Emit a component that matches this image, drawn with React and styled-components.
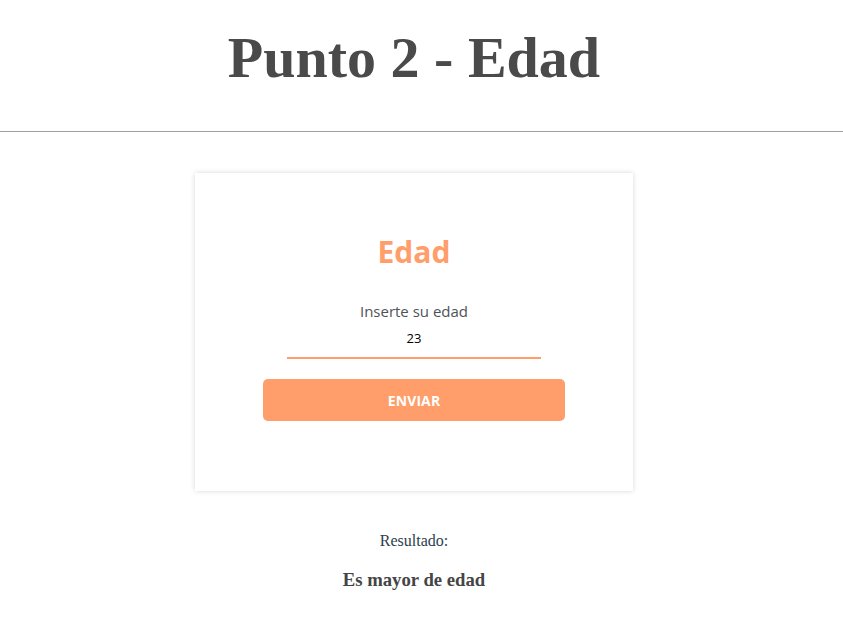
import React, { useState } from "react";
import styled, { createGlobalStyle } from "styled-components";

const GlobalStyle = createGlobalStyle`
  body {
    margin: 0;
    background: #ffffff;
    font-family: "Liberation Serif", "Times New Roman", serif;
    color: #2c3e50;
  }
`;

export default function App() {
  const [edad, setEdad] = useState("23");
  const mayor = Number(edad) >= 18;

  return (
    <>
      <GlobalStyle />
      <Header>
        <Title>Punto 2 - Edad</Title>
      </Header>
      <Divider />
      <Main>
        <Card>
          <CardTitle>Edad</CardTitle>
          <Label htmlFor="edad">Inserte su edad</Label>
          <Input
            id="edad"
            type="text"
            value={edad}
            onChange={e => setEdad(e.target.value)}
          />
          <Button type="button">ENVIAR</Button>
        </Card>
        <ResultLabel>Resultado:</ResultLabel>
        <ResultText>{mayor ? "Es mayor de edad" : "Es menor de edad"}</ResultText>
      </Main>
    </>
  );
}

const Header = styled.header`
  padding: 24px 15px 0 0;
  text-align: center;
`;

const Title = styled.h1`
  margin: 0;
  font-size: 58px;
  line-height: 67px;
  font-weight: 700;
  color: #4a4a4a;
`;

const Divider = styled.hr`
  margin: 40px 0 0;
  border: none;
  border-top: 1px solid #a0a0a0;
`;

const Main = styled.main`
  display: flex;
  flex-direction: column;
  align-items: center;
  padding: 41px 15px 0 0;
`;

const Card = styled.div`
  width: 438px;
  box-sizing: border-box;
  padding: 59px 0 70px;
  display: flex;
  flex-direction: column;
  align-items: center;
  background: #ffffff;
  box-shadow: 0 0 5px rgba(0, 0, 0, 0.16);
  font-family: "Open Sans", "Noto Sans", sans-serif;
`;

const CardTitle = styled.h2`
  margin: 0;
  font-size: 30px;
  line-height: 40px;
  font-weight: 700;
  color: #ff9e6a;
`;

const Label = styled.label`
  margin-top: 29px;
  font-size: 15px;
  line-height: 20px;
  color: #4f5358;
`;

const Input = styled.input`
  margin-top: 4px;
  width: 254px;
  box-sizing: border-box;
  padding: 3px 0 9px;
  border: none;
  border-bottom: 2px solid #ff9e6a;
  outline: none;
  background: transparent;
  font-family: "Open Sans", "Noto Sans", sans-serif;
  font-size: 13px;
  line-height: 20px;
  color: #000000;
  text-align: center;
`;

const Button = styled.button`
  margin-top: 20px;
  width: 302px;
  height: 42px;
  border: none;
  border-radius: 5px;
  background: #ff9e6a;
  color: #ffffff;
  font-family: "Open Sans", "Noto Sans", sans-serif;
  font-size: 14px;
  font-weight: 700;
  letter-spacing: 0.1px;
  cursor: pointer;
`;

const ResultLabel = styled.p`
  margin: 41px 0 0;
  font-size: 16px;
  line-height: 18px;
  color: #2c3e50;
`;

const ResultText = styled.h3`
  margin: 19px 0 0;
  font-size: 18.72px;
  line-height: 22px;
  font-weight: 700;
  color: #454545;
`;
